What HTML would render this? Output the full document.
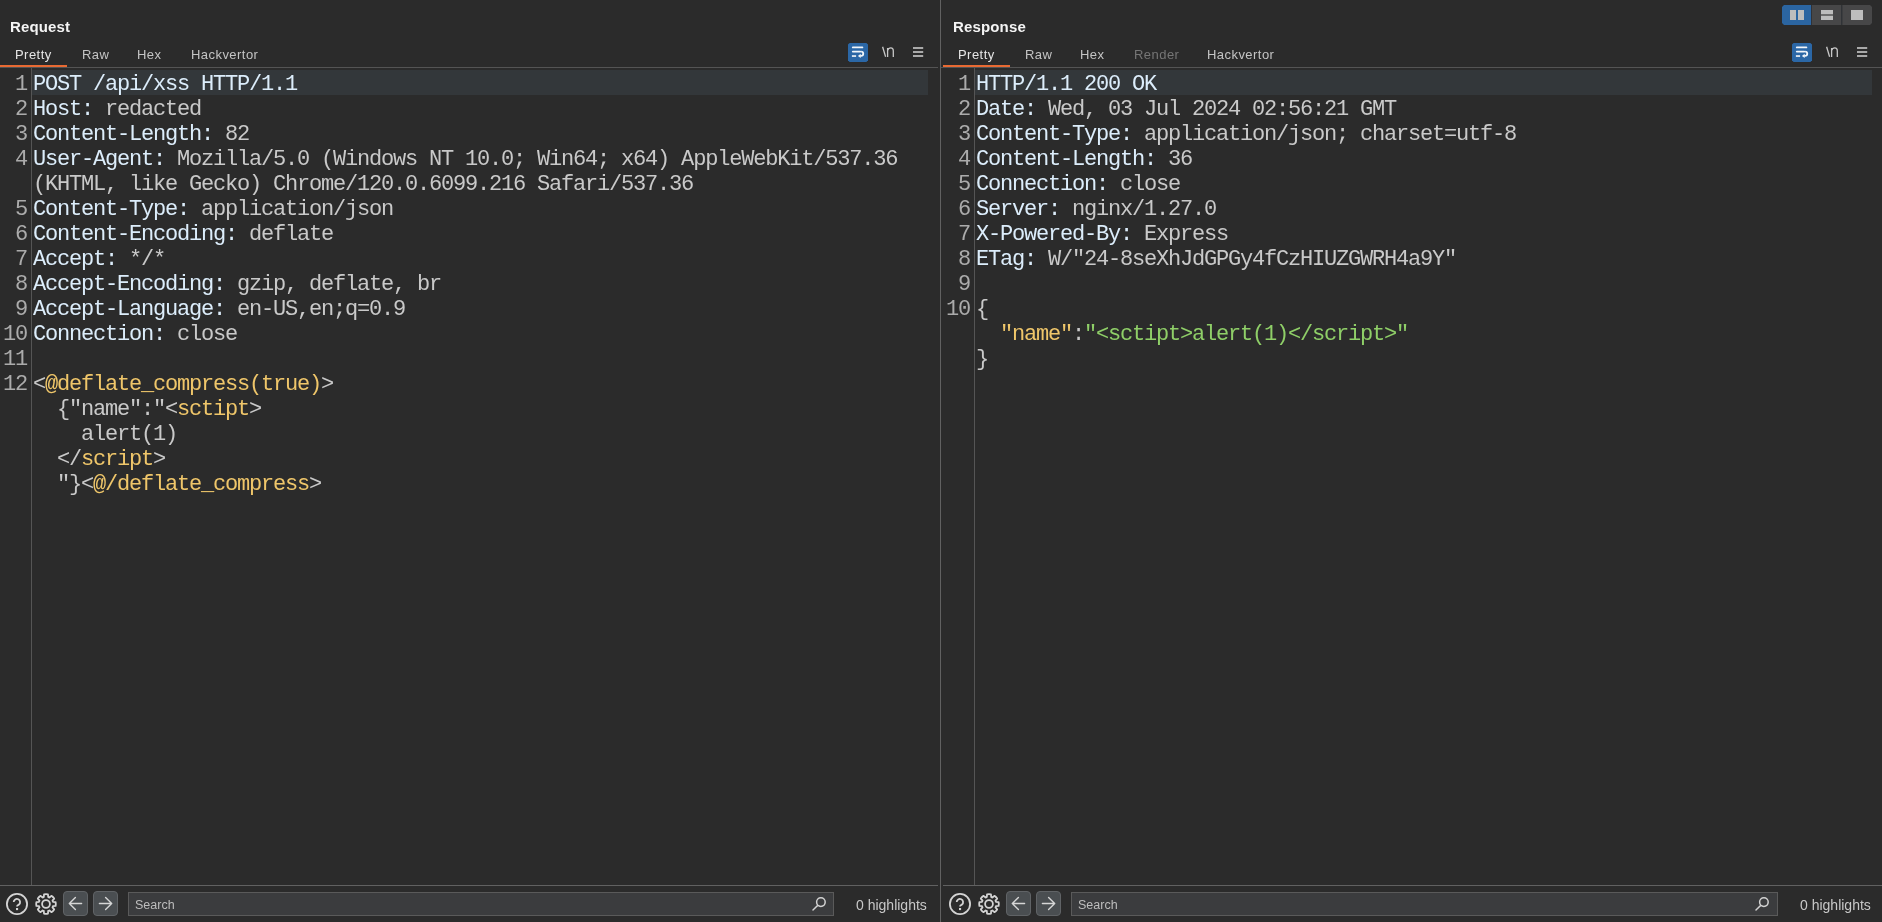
<!DOCTYPE html>
<html><head><meta charset="utf-8">
<style>
*{margin:0;padding:0;box-sizing:border-box}
html,body{width:1882px;height:922px;overflow:hidden;background:#2b2b2b}
body{position:relative;font-family:"Liberation Sans",sans-serif}
.code,.nums,.title,.tab,.hcount,.search span{will-change:transform}
.abs{position:absolute}
.title{position:absolute;top:18px;font-weight:bold;font-size:15px;letter-spacing:0.15px;color:#f4f4f4}
.tab{position:absolute;top:47px;font-size:13px;letter-spacing:0.45px;color:#c4c4c4;white-space:nowrap}
.tab.sel{color:#e6e6e6}
.tab.dis{color:#767676}
.uline{position:absolute;top:65px;height:2px;width:67px;background:#e96a33}
.sep{position:absolute;height:1px;background:#616161}
.vline{position:absolute;width:1px;background:#616161}
.hl{position:absolute;top:70px;height:25px;background:#33373a}
.code{position:absolute;top:72px;font-family:"Liberation Mono",monospace;font-size:22px;letter-spacing:-1.2px;line-height:25px;white-space:pre;color:#c9c9c9}
.nums{position:absolute;top:72px;font-family:"Liberation Mono",monospace;font-size:22px;letter-spacing:-1.2px;line-height:25px;white-space:pre;color:#ababab;text-align:right;width:24px}
.k{color:#dcedfb}
.y{color:#efc66a}
.g{color:#8fcf68}
.w{color:#d4d4d4}
.btn{position:absolute;top:891px;width:25px;height:25px;border-radius:4px;background:#474a4d;border:1px solid #54575a}
.search{position:absolute;top:892px;height:24px;background:#3b3c3e;border:1px solid #5a5a5a}
.search span{position:absolute;left:6px;top:5px;font-size:12.5px;color:#bdbdbd}
.hcount{position:absolute;top:897px;font-size:14px;color:#c8c8c8;white-space:nowrap}
</style></head><body>

<!-- divider -->
<div class="vline" style="left:940px;top:0;height:922px"></div>

<!-- LEFT PANEL -->
<div class="title" style="left:10px">Request</div>
<div class="tab sel" style="left:15px">Pretty</div>
<div class="tab" style="left:82px">Raw</div>
<div class="tab" style="left:137px">Hex</div>
<div class="tab" style="left:191px">Hackvertor</div>
<div class="uline" style="left:0"></div>
<div class="sep" style="left:0;top:67px;width:938px;background:#545454"></div>
<div class="vline" style="left:31px;top:68px;height:817px;background:#555"></div>
<div class="hl" style="left:32px;width:896px"></div>
<div class="nums" style="left:3px">1
2
3
4

5
6
7
8
9
10
11
12</div>
<div class="code" style="left:33px"><span class="k">POST /api/xss HTTP/1.1</span>
<span class="k">Host:</span> redacted
<span class="k">Content-Length:</span> 82
<span class="k">User-Agent:</span> Mozilla/5.0 (Windows NT 10.0; Win64; x64) AppleWebKit/537.36
(KHTML, like Gecko) Chrome/120.0.6099.216 Safari/537.36
<span class="k">Content-Type:</span> application/json
<span class="k">Content-Encoding:</span> deflate
<span class="k">Accept:</span> */*
<span class="k">Accept-Encoding:</span> gzip, deflate, br
<span class="k">Accept-Language:</span> en-US,en;q=0.9
<span class="k">Connection:</span> close

&lt;<span class="y">@deflate_compress(true)</span>&gt;
  {"name":"&lt;<span class="y">sctipt</span>&gt;
    alert(1)
  &lt;/<span class="y">script</span>&gt;
  "}&lt;<span class="y">@/deflate_compress</span>&gt;</div>
<div class="sep" style="left:0;top:885px;width:938px"></div>

<!-- RIGHT PANEL -->
<div class="title" style="left:953px">Response</div>
<div class="tab sel" style="left:958px">Pretty</div>
<div class="tab" style="left:1025px">Raw</div>
<div class="tab" style="left:1080px">Hex</div>
<div class="tab dis" style="left:1134px">Render</div>
<div class="tab" style="left:1207px">Hackvertor</div>
<div class="uline" style="left:943px"></div>
<div class="sep" style="left:941px;top:67px;width:941px;background:#545454"></div>
<div class="vline" style="left:974px;top:68px;height:817px;background:#555"></div>
<div class="hl" style="left:975px;width:897px"></div>
<div class="nums" style="left:946px">1
2
3
4
5
6
7
8
9
10</div>
<div class="code" style="left:976px"><span class="k">HTTP/1.1 200 OK</span>
<span class="k">Date:</span> Wed, 03 Jul 2024 02:56:21 GMT
<span class="k">Content-Type:</span> application/json; charset=utf-8
<span class="k">Content-Length:</span> 36
<span class="k">Connection:</span> close
<span class="k">Server:</span> nginx/1.27.0
<span class="k">X-Powered-By:</span> Express
<span class="k">ETag:</span> W/"24-8seXhJdGPGy4fCzHIUZGWRH4a9Y"

{
  <span class="y">"name"</span>:<span class="g">"&lt;sctipt&gt;alert(1)&lt;/script&gt;"</span>
}</div>
<div class="sep" style="left:943px;top:885px;width:939px"></div>

<!-- bottom bars -->
<svg class="abs" style="left:0px;top:885px;z-index:2" width="940" height="37" viewBox="0 885 940 37">
<g fill="none" stroke="#d4d4d4" stroke-width="1.8">
<circle cx="17" cy="904" r="10.1"/>
<path d="M13.7 902.1 A3.2 3.2 0 1 1 18.9 904.6 Q17 905.6 17 906.4" stroke-linecap="butt"/>
<path d="M-2.20 -6.96 L-1.95 -9.60 A9.80 9.80 0 0 1 1.95 -9.60 L2.20 -6.96 A7.30 7.30 0 0 1 3.37 -6.48 L5.41 -8.17 A9.80 9.80 0 0 1 8.17 -5.41 L6.48 -3.37 A7.30 7.30 0 0 1 6.96 -2.20 L9.60 -1.95 A9.80 9.80 0 0 1 9.60 1.95 L6.96 2.20 A7.30 7.30 0 0 1 6.48 3.37 L8.17 5.41 A9.80 9.80 0 0 1 5.41 8.17 L3.37 6.48 A7.30 7.30 0 0 1 2.20 6.96 L1.95 9.60 A9.80 9.80 0 0 1 -1.95 9.60 L-2.20 6.96 A7.30 7.30 0 0 1 -3.37 6.48 L-5.41 8.17 A9.80 9.80 0 0 1 -8.17 5.41 L-6.48 3.37 A7.30 7.30 0 0 1 -6.96 2.20 L-9.60 1.95 A9.80 9.80 0 0 1 -9.60 -1.95 L-6.96 -2.20 A7.30 7.30 0 0 1 -6.48 -3.37 L-8.17 -5.41 A9.80 9.80 0 0 1 -5.41 -8.17 L-3.37 -6.48 A7.30 7.30 0 0 1 -2.20 -6.96 Z" transform="translate(46 904)" stroke-linejoin="round"/>
<circle cx="46" cy="904" r="3.9"/>
</g>
<rect x="16" y="908" width="2.1" height="2.1" fill="#d4d4d4"/>
<rect x="63.5" y="891.5" width="24" height="24" rx="3.5" fill="#4a4e51" stroke="#606366" stroke-width="1"/>
<rect x="93.5" y="891.5" width="24" height="24" rx="3.5" fill="#4a4e51" stroke="#606366" stroke-width="1"/>
<g fill="none" stroke="#d6d6d6" stroke-width="1.4" stroke-linecap="round" stroke-linejoin="round">
<path d="M81.6 903.5 H69.3 M75.4 897.6 L69.3 903.5 L75.4 909.4"/>
<path d="M99.4 903.5 H111.7 M105.6 897.6 L111.7 903.5 L105.6 909.4"/>
</g>
<g fill="none" stroke="#d2d2d2" stroke-width="1.5" stroke-linecap="round">
<circle cx="820.9" cy="902.1" r="4.3"/>
<path d="M817.3 905.7 L813 910"/>
</g>
</svg>
<svg class="abs" style="left:943px;top:885px;z-index:2" width="940" height="37" viewBox="0 885 940 37">
<g fill="none" stroke="#d4d4d4" stroke-width="1.8">
<circle cx="17" cy="904" r="10.1"/>
<path d="M13.7 902.1 A3.2 3.2 0 1 1 18.9 904.6 Q17 905.6 17 906.4" stroke-linecap="butt"/>
<path d="M-2.20 -6.96 L-1.95 -9.60 A9.80 9.80 0 0 1 1.95 -9.60 L2.20 -6.96 A7.30 7.30 0 0 1 3.37 -6.48 L5.41 -8.17 A9.80 9.80 0 0 1 8.17 -5.41 L6.48 -3.37 A7.30 7.30 0 0 1 6.96 -2.20 L9.60 -1.95 A9.80 9.80 0 0 1 9.60 1.95 L6.96 2.20 A7.30 7.30 0 0 1 6.48 3.37 L8.17 5.41 A9.80 9.80 0 0 1 5.41 8.17 L3.37 6.48 A7.30 7.30 0 0 1 2.20 6.96 L1.95 9.60 A9.80 9.80 0 0 1 -1.95 9.60 L-2.20 6.96 A7.30 7.30 0 0 1 -3.37 6.48 L-5.41 8.17 A9.80 9.80 0 0 1 -8.17 5.41 L-6.48 3.37 A7.30 7.30 0 0 1 -6.96 2.20 L-9.60 1.95 A9.80 9.80 0 0 1 -9.60 -1.95 L-6.96 -2.20 A7.30 7.30 0 0 1 -6.48 -3.37 L-8.17 -5.41 A9.80 9.80 0 0 1 -5.41 -8.17 L-3.37 -6.48 A7.30 7.30 0 0 1 -2.20 -6.96 Z" transform="translate(46 904)" stroke-linejoin="round"/>
<circle cx="46" cy="904" r="3.9"/>
</g>
<rect x="16" y="908" width="2.1" height="2.1" fill="#d4d4d4"/>
<rect x="63.5" y="891.5" width="24" height="24" rx="3.5" fill="#4a4e51" stroke="#606366" stroke-width="1"/>
<rect x="93.5" y="891.5" width="24" height="24" rx="3.5" fill="#4a4e51" stroke="#606366" stroke-width="1"/>
<g fill="none" stroke="#d6d6d6" stroke-width="1.4" stroke-linecap="round" stroke-linejoin="round">
<path d="M81.6 903.5 H69.3 M75.4 897.6 L69.3 903.5 L75.4 909.4"/>
<path d="M99.4 903.5 H111.7 M105.6 897.6 L111.7 903.5 L105.6 909.4"/>
</g>
<g fill="none" stroke="#d2d2d2" stroke-width="1.5" stroke-linecap="round">
<circle cx="820.9" cy="902.1" r="4.3"/>
<path d="M817.3 905.7 L813 910"/>
</g>
</svg>
<svg class="abs" style="left:848px;top:40px" width="80" height="25" viewBox="0 0 80 25">
<path d="M1.6 2.9 H18.4 L20 4.5 V20.3 L18.4 21.9 H1.6 L0 20.3 V4.5 Z" fill="#2b67a6"/>
<g fill="#f2f6fa">
<rect x="3.9" y="6.5" width="11.4" height="1.8" rx="0.9"/>
<rect x="3.9" y="10.7" width="9.3" height="1.8" rx="0.9"/>
<rect x="3.9" y="15.1" width="4.2" height="1.9" fill="#d8e2ec"/>
<path d="M9.9 15.9 L12.7 13.8 L12.7 18 Z"/>
</g>
<path d="M13.1 11.6 A2.05 2.05 0 0 1 13.1 15.9 H12.2" fill="none" stroke="#f2f6fa" stroke-width="1.8"/>
<g stroke="#c8c8c8" stroke-width="1.3" fill="none">
<path d="M34.6 6.8 L37.6 16.8"/>
<path d="M39.6 17 V8 M39.6 10.5 Q40.5 7.9 42.8 7.9 Q45.3 7.9 45.3 10.8 V17"/>
</g>
<g fill="#a9a9a9">
<rect x="65" y="7" width="10.2" height="2"/>
<rect x="65" y="11" width="10.2" height="2"/>
<rect x="65" y="15" width="10.2" height="2"/>
</g>
</svg>
<svg class="abs" style="left:1792px;top:40px" width="80" height="25" viewBox="0 0 80 25">
<path d="M1.6 2.9 H18.4 L20 4.5 V20.3 L18.4 21.9 H1.6 L0 20.3 V4.5 Z" fill="#2b67a6"/>
<g fill="#f2f6fa">
<rect x="3.9" y="6.5" width="11.4" height="1.8" rx="0.9"/>
<rect x="3.9" y="10.7" width="9.3" height="1.8" rx="0.9"/>
<rect x="3.9" y="15.1" width="4.2" height="1.9" fill="#d8e2ec"/>
<path d="M9.9 15.9 L12.7 13.8 L12.7 18 Z"/>
</g>
<path d="M13.1 11.6 A2.05 2.05 0 0 1 13.1 15.9 H12.2" fill="none" stroke="#f2f6fa" stroke-width="1.8"/>
<g stroke="#c8c8c8" stroke-width="1.3" fill="none">
<path d="M34.6 6.8 L37.6 16.8"/>
<path d="M39.6 17 V8 M39.6 10.5 Q40.5 7.9 42.8 7.9 Q45.3 7.9 45.3 10.8 V17"/>
</g>
<g fill="#a9a9a9">
<rect x="65" y="7" width="10.2" height="2"/>
<rect x="65" y="11" width="10.2" height="2"/>
<rect x="65" y="15" width="10.2" height="2"/>
</g>
</svg>
<svg class="abs" style="left:1782px;top:5px" width="90" height="20" viewBox="0 0 90 20">
<path d="M2 0 H29 V20 H2 L0 18 V2 Z" fill="#2b65a1"/>
<rect x="29.9" y="0" width="29.4" height="20" fill="#474748"/>
<path d="M60.2 0 H88 L90 2 V18 L88 20 H60.2 Z" fill="#474748"/>
<rect x="29" y="0" width="0.9" height="20" fill="#30343a"/>
<rect x="59.3" y="0" width="0.9" height="20" fill="#30343a"/>
<g fill="#bdbdbd">
<rect x="8" y="5" width="6" height="10"/>
<rect x="16" y="5" width="6" height="10"/>
<rect x="39" y="5" width="12" height="4"/>
<rect x="39" y="9" width="12" height="2" fill="#6e6e6e"/>
<rect x="39" y="11" width="12" height="4"/>
<rect x="69" y="5" width="12" height="10"/>
</g>
</svg>

<div class="search" style="left:128px;width:706px"><span>Search</span></div>
<div class="hcount" style="left:856px">0 highlights</div>

<div class="search" style="left:1071px;width:707px"><span>Search</span></div>
<div class="hcount" style="left:1800px">0 highlights</div>

</body></html>
